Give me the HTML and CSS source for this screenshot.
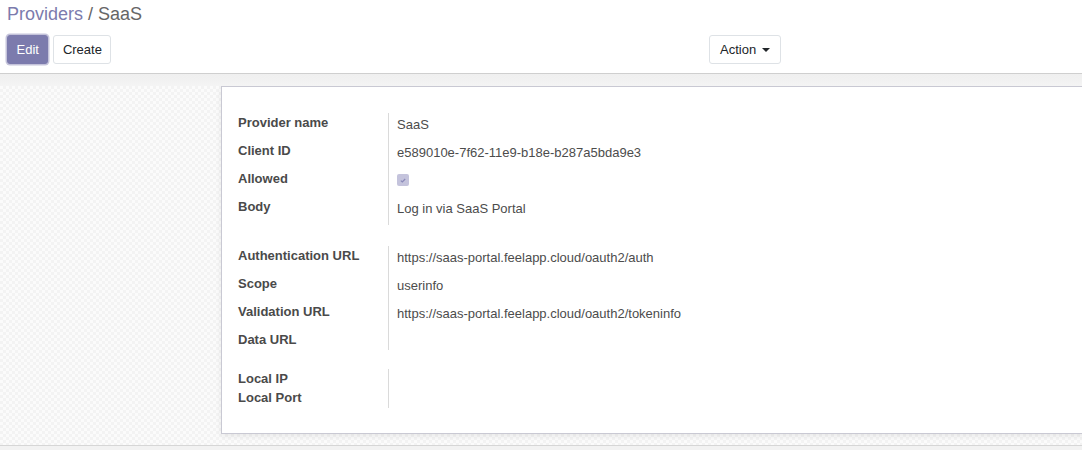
FILE: index.html
```html
<!DOCTYPE html>
<html>
<head>
<meta charset="utf-8">
<link rel="stylesheet" href="styles.css">
</head>
<body>
<div class="control-panel">
  <div class="breadcrumb"><span class="crumb-link">Providers</span><span class="crumb-active"> / SaaS</span></div>
  <div class="cp-bottom">
    <div class="cp-left">
      <button class="btn btn-primary">Edit</button>
      <button class="btn btn-secondary">Create</button>
    </div>
    <div class="cp-right">
      <button class="btn btn-secondary btn-action">Action <span class="caret"></span></button>
    </div>
  </div>
</div>
<div class="statusbar"></div>
<div class="form-bg">
  <div class="sheet">
    <div class="group">
      <div class="label">Provider name</div><div class="value">SaaS</div>
      <div class="label">Client ID</div><div class="value">e589010e-7f62-11e9-b18e-b287a5bda9e3</div>
      <div class="label">Allowed</div><div class="value value-check"><span class="checkbox"><svg width="6" height="5" viewBox="0 0 6 5"><path d="M0.8 2.6 L2.3 4 L5.2 1" fill="none" stroke="#8a89b8" stroke-width="1.2"/></svg></span></div>
      <div class="label">Body</div><div class="value">Log in via SaaS Portal</div>
    </div>
    <div class="group">
      <div class="label">Authentication URL</div><div class="value">https://saas-portal.feelapp.cloud/oauth2/auth</div>
      <div class="label">Scope</div><div class="value">userinfo</div>
      <div class="label">Validation URL</div><div class="value">https://saas-portal.feelapp.cloud/oauth2/tokeninfo</div>
      <div class="label">Data URL</div><div class="value empty"></div>
    </div>
    <div class="group">
      <div class="label">Local IP</div><div class="value empty"></div>
      <div class="label">Local Port</div><div class="value empty"></div>
    </div>
  </div>
</div>
<div class="bottom-bar"></div>
</body>
</html>
```
FILE: styles.css
```css
html, body {
  margin: 0;
  padding: 0;
  overflow: hidden;
  width: 1082px;
  height: 450px;
  background: #fff;
  font-family: "Liberation Sans", Arial, sans-serif;
  font-size: 13px;
  line-height: 1.5;
  color: #4c4c4c;
}

.control-panel {
  height: 73px;
  border-bottom: 1px solid #cfcfcf;
  padding: 0 7px;
  box-sizing: content-box;
}

.breadcrumb {
  font-size: 18px;
  line-height: 26px;
  padding-top: 1px;
  height: 26px;
}

.crumb-link { color: #7c7bad; }
.crumb-active { color: #666; }

.cp-bottom {
  display: grid;
  grid-template-columns: 702px auto;
  margin-top: 7px;
}

.cp-left {
  display: flex;
  gap: 5px;
  padding-left: 0;
}

.btn {
  font-family: "Liberation Sans", Arial, sans-serif;
  font-size: 13px;
  line-height: 19px;
  padding: 4px 8.5px;
  border: 1px solid #dee2e6;
  border-radius: 3px;
  background: #fff;
  color: #212529;
  margin: 0;
  height: 29px;
  margin-top: 1px;
}

.btn-primary {
  background: #7c7bad;
  border-color: #7c7bad;
  color: #fff;
  padding: 4px 8.5px;
  box-shadow: 0 0 0 1.5px rgba(124, 123, 173, 0.45);
}

.btn-action {
  display: flex;
  align-items: center;
  gap: 6px;
  padding: 4px 10px;
}

.caret {
  display: inline-block;
  width: 0;
  height: 0;
  border-top: 4.5px solid #212529;
  border-left: 4.5px solid transparent;
  border-right: 4.5px solid transparent;
  margin-top: 1px;
}

.statusbar {
  height: 12px;
  background: linear-gradient(#efefef, #f4f4f4);
}

.form-bg {
  height: 359px;
  background-color: #f7f7f7;
  background-image: conic-gradient(#f3f3f3 25%, #fbfbfb 0 50%, #f3f3f3 0 75%, #fbfbfb 0);
  background-size: 6px 6px;
  overflow: hidden;
}

.sheet {
  margin-left: 221px;
  width: 900px;
  background: #fff;
  border: 1px solid #c9c9d3;
  box-shadow: 0 2px 6px rgba(0, 0, 0, 0.08);
  padding: 26px 16px 24px 16px;
  box-sizing: border-box;
  height: 348px;
}

.group {
  display: grid;
  grid-template-columns: 151px 1fr;
}

.group + .group {
  margin-top: 19px;
}

.group:nth-child(2) {
  margin-top: 21px;
}

.label {
  font-weight: bold;
  color: #4a4a4a;
  border-right: 1px solid #dadada;
  line-height: 19.5px;
}

.value {
  padding: 2px 0 6.5px 8px;
  line-height: 19.5px;
  color: #4c4c4c;
}

.value.empty {
  padding: 0;
  min-height: 0;
}

.value-check {
  padding-top: 5px;
  padding-bottom: 0;
  height: 23px;
}

.checkbox {
  display: flex;
  align-items: center;
  justify-content: center;
  width: 12px;
  height: 12px;
  border-radius: 2px;
  background: #c4c3dc;
}

.bottom-bar {
  border-top: 1px solid #d6d6d6;
  height: 10px;
  background: #f2f2f2;
}
```
